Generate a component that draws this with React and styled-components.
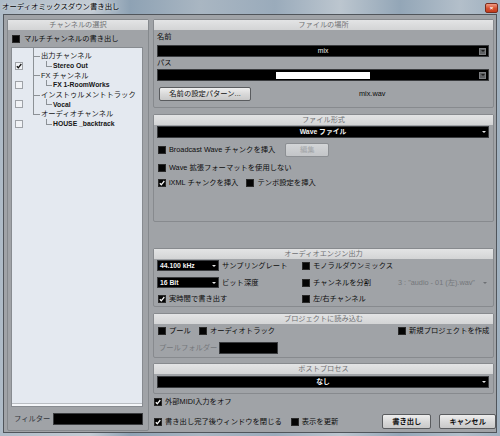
import React from 'react';
import styled, { createGlobalStyle } from 'styled-components';

const GlobalStyle = createGlobalStyle`
  html, body {
    margin: 0;
    padding: 0;
    background: #8ea0b1;
  }
  * {
    box-sizing: border-box;
  }
`;

const Window = styled.div`
  width: 500px;
  height: 436px;
  display: flex;
  flex-direction: column;
  overflow: hidden;
  background: linear-gradient(90deg, #aebbc7 0%, #c4ccd4 18%, #8ea2b4 26%, #a9b6c2 40%, #9aabbb 55%, #bcc6cf 68%, #93a6b7 80%, #b3bfca 92%, #9fb0bf 100%);
  font-family: "Liberation Sans", "Noto Sans CJK JP", sans-serif;
  font-size: 7.3px;
  color: #0c0c0c;
`;

const TitleBar = styled.div`
  height: 14px;
  flex-shrink: 0;
  display: flex;
  align-items: center;
  justify-content: space-between;
  padding: 0 2px 0 2px;
`;

const Title = styled.span`
  font-size: 7.4px;
  line-height: 14px;
  color: #000;
  text-shadow: 0 0 3px rgba(255, 255, 255, 0.8);
`;

const CloseButton = styled.div`
  width: 13px;
  height: 10px;
  margin-top: 1px;
  border: 1px solid #7b2c1d;
  border-radius: 2px;
  background: linear-gradient(#f09a82, #d4502f 55%, #c33b1c);
  color: #fff;
  font-size: 6px;
  font-weight: bold;
  line-height: 8px;
  text-align: center;
`;

const Client = styled.div`
  flex: 1;
  margin: 0 3px 3px;
  border: 1px solid #50555b;
  background: #a0a3a7;
  display: flex;
  gap: 4px;
  padding: 4px 2px 0 3px;
`;

const LeftPanel = styled.div`
  width: 142px;
  height: 412px;
  border: 1px solid #85898d;
  border-radius: 2px;
  display: flex;
  flex-direction: column;
`;

const PanelHeader = styled.div`
  height: 10px;
  flex-shrink: 0;
  background: linear-gradient(#e3e4e5, #d3d4d5);
  color: #6f7073;
  font-size: 7.2px;
  line-height: 10px;
  text-align: center;
`;

const Row = styled.div`
  display: flex;
  align-items: center;
  height: ${p => p.$h || 10}px;
  margin-top: ${p => p.$mt || 0}px;
  padding-left: ${p => p.$pl || 0}px;
  gap: ${p => p.$gap || 0}px;
  flex-shrink: 0;
`;

const Item = styled.div`
  display: flex;
  align-items: center;
  gap: 3px;
  margin-left: ${p => p.$ml || 0}px;
  white-space: nowrap;
  line-height: 10px;
`;

const Label = styled.span`
  white-space: nowrap;
  line-height: 10px;
  color: ${p => p.$color || (p.$muted ? '#74777b' : '#0c0c0c')};
  margin-left: ${p => p.$ml || 0}px;
`;

const Box = styled.span`
  width: 8px;
  height: 8px;
  flex-shrink: 0;
  display: inline-flex;
  align-items: center;
  justify-content: center;
  background: ${p => (p.$light ? '#f1f3f6' : '#050505')};
  border: 1px solid ${p => (p.$light ? '#9ea2a7' : '#2a2a2a')};
  margin-left: ${p => p.$ml || 0}px;
`;

function Check({ checked, light, ml }) {
  return (
    <Box $light={light} $ml={ml}>
      {checked && (
        <svg width="6" height="6" viewBox="0 0 6 6">
          <path d="M0.8 3.2 L2.3 4.8 L5.3 1" fill="none" stroke={light ? '#111' : '#f4f4f4'} strokeWidth="1.3" />
        </svg>
      )}
    </Box>
  );
}

const TreeBox = styled.div`
  margin: 4px 0 0 3px;
  width: 132px;
  height: 360px;
  border: 1px solid #878b90;
  background: #e4e9f0;
  display: flex;
  flex-direction: column;
`;

const TreeLead = styled.div`
  height: 3px;
  margin-left: 21px;
  border-left: 1px solid #8c9196;
  flex-shrink: 0;
`;

const TreeRow = styled.div`
  height: 9.7px;
  display: flex;
  align-items: center;
  flex-shrink: 0;
`;

const CheckCell = styled.div`
  width: 21px;
  height: 100%;
  display: flex;
  align-items: center;
  padding-left: 3px;
`;

const Trunk = styled.div`
  position: relative;
  width: 8px;
  height: 100%;
  flex-shrink: 0;
  &::before {
    content: '';
    position: absolute;
    left: 0;
    top: 0;
    height: ${p => (p.$end ? '50%' : '100%')};
    border-left: ${p => (p.$line ? '1px solid #8c9196' : 'none')};
  }
  &::after {
    content: '';
    position: absolute;
    left: 0;
    top: 50%;
    width: ${p => (p.$branch ? '7px' : '0')};
    border-top: 1px solid #8c9196;
  }
`;

const Branch = styled.div`
  position: relative;
  width: 7px;
  height: 100%;
  margin-left: 5px;
  flex-shrink: 0;
  &::before {
    content: '';
    position: absolute;
    left: 0;
    top: 0;
    height: 50%;
    border-left: 1px solid #8c9196;
  }
  &::after {
    content: '';
    position: absolute;
    left: 0;
    top: 50%;
    width: 6px;
    border-top: 1px solid #8c9196;
  }
`;

const TreeText = styled.span`
  white-space: nowrap;
  line-height: 9px;
  color: #151515;
  font-weight: ${p => (p.$bold ? 'bold' : 'normal')};
  font-size: ${p => (p.$bold ? '6.8px' : '7.3px')};
`;

const TreeSpacer = styled.div`
  flex: 1;
`;

const TreeFoot = styled.div`
  height: 3px;
  border-top: 1px solid #b9bdc2;
  background: #f4f6f9;
`;

const BlackField = styled.div`
  width: ${p => (p.$w ? `${p.$w}px` : 'auto')};
  flex: ${p => (p.$w ? '0 0 auto' : '1')};
  height: ${p => p.$h || 12}px;
  margin-left: ${p => p.$ml || 0}px;
  background: #000;
  border: 1px solid #3a3c3f;
  display: flex;
  align-items: center;
  color: #f2f2f2;
  font-weight: ${p => (p.$bold ? 'bold' : 'normal')};
  padding: 0 2px;
`;

const FieldSide = styled.div`
  flex: 1;
  display: flex;
  justify-content: flex-end;
`;

const FieldText = styled.span`
  white-space: nowrap;
  line-height: 10px;
  font-size: 6.8px;
`;

const ArrowBox = styled.span`
  width: 7px;
  height: 7px;
  background: #5e6063;
  border: 1px solid #7c7e81;
  display: inline-flex;
  align-items: center;
  justify-content: center;
  &::after {
    content: '';
    border-left: 2px solid transparent;
    border-right: 2px solid transparent;
    border-top: 2px solid #1c1c1c;
  }
`;

const Caret = styled.span`
  width: 0;
  height: 0;
  border-left: 2px solid transparent;
  border-right: 2px solid transparent;
  border-top: 2px solid ${p => p.$color || '#e6e6e6'};
`;

const PathBox = styled.span`
  width: 94px;
  height: 7px;
  background: #fff;
`;

const RightColumn = styled.div`
  width: 341px;
  display: flex;
  flex-direction: column;
`;

const Section = styled.div`
  height: ${p => p.$h}px;
  margin-top: ${p => p.$mt || 0}px;
  flex-shrink: 0;
  border: 1px solid #878a8e;
  border-radius: 2px;
  display: flex;
  flex-direction: column;
`;

const SectionBody = styled.div`
  display: flex;
  flex-direction: column;
  padding: 0 4px 0 3px;
`;

const Button = styled.div`
  width: ${p => p.$w}px;
  height: ${p => p.$h || 14}px;
  margin-left: ${p => p.$ml || 0}px;
  flex-shrink: 0;
  border: 1px solid ${p => (p.$disabled ? '#8c8f93' : '#5a5c5f')};
  border-radius: 2px;
  background: ${p => (p.$disabled ? 'linear-gradient(#d3d5d7, #c3c5c8)' : 'linear-gradient(#eeeeee, #d9d9d9 50%, #c9c9c9)')};
  color: ${p => (p.$disabled ? '#a2a5a8' : '#111')};
  font-weight: ${p => (p.$bold ? 'bold' : 'normal')};
  display: flex;
  align-items: center;
  justify-content: center;
  white-space: nowrap;
  line-height: 10px;
`;

const Col = styled.div`
  width: ${p => p.$w}px;
  display: flex;
  align-items: center;
  gap: 3px;
  flex-shrink: 0;
`;

const Fill = styled.div`
  flex: 1;
  display: flex;
  align-items: center;
  justify-content: space-between;
  padding-right: 2px;
`;

export default function App() {
  const tree = [
    { label: '出力チャンネル', child: 'Stereo Out', checked: true },
    { label: 'FX チャンネル', child: 'FX 1-RoomWorks' },
    { label: 'インストゥルメントトラック', child: 'Vocal' },
    { label: 'オーディオチャンネル', child: 'HOUSE _backtrack', last: true },
  ];

  return (
    <>
      <GlobalStyle />
      <Window>
        <TitleBar>
          <Title>オーディオミックスダウン書き出し</Title>
          <CloseButton>×</CloseButton>
        </TitleBar>
        <Client>
          <LeftPanel>
            <PanelHeader>チャンネルの選択</PanelHeader>
            <Row $h={8} $mt={5} $pl={4} $gap={4}>
              <Check />
              <Label>マルチチャンネルの書き出し</Label>
            </Row>
            <TreeBox>
              <TreeLead />
              {tree.map(node => (
                <React.Fragment key={node.label}>
                  <TreeRow>
                    <CheckCell />
                    <Trunk $line $end={node.last} $branch />
                    <TreeText>{node.label}</TreeText>
                  </TreeRow>
                  <TreeRow>
                    <CheckCell>
                      <Check light checked={node.checked} />
                    </CheckCell>
                    <Trunk $line={!node.last} />
                    <Branch />
                    <TreeText $bold>{node.child}</TreeText>
                  </TreeRow>
                </React.Fragment>
              ))}
              <TreeSpacer />
              <TreeFoot />
            </TreeBox>
            <Row $h={12} $mt={6} $pl={6}>
              <Label $color="#33373d">フィルター</Label>
              <BlackField $w={90} $ml={3} />
            </Row>
          </LeftPanel>

          <RightColumn>
            <Section $h={89}>
              <PanelHeader>ファイルの場所</PanelHeader>
              <SectionBody>
                <Row $mt={2}>
                  <Label>名前</Label>
                </Row>
                <Row $h={12} $mt={3}>
                  <BlackField>
                    <FieldSide />
                    <FieldText>mix</FieldText>
                    <FieldSide>
                      <ArrowBox />
                    </FieldSide>
                  </BlackField>
                </Row>
                <Row $mt={1}>
                  <Label>パス</Label>
                </Row>
                <Row $h={12} $mt={1}>
                  <BlackField>
                    <FieldSide />
                    <PathBox />
                    <FieldSide>
                      <ArrowBox />
                    </FieldSide>
                  </BlackField>
                </Row>
                <Row $h={14} $mt={6}>
                  <Button $w={92} $ml={2}>名前の設定パターン...</Button>
                  <Label $ml={108}>mix.wav</Label>
                </Row>
              </SectionBody>
            </Section>

            <Section $h={108} $mt={6}>
              <PanelHeader>ファイル形式</PanelHeader>
              <SectionBody>
                <Row $h={12} $mt={1}>
                  <BlackField $bold>
                    <FieldSide />
                    <FieldText>Wave ファイル</FieldText>
                    <FieldSide>
                      <Caret />
                    </FieldSide>
                  </BlackField>
                </Row>
                <Row $h={14} $mt={5} $pl={1}>
                  <Item>
                    <Check />
                    <Label>Broadcast Wave チャンクを挿入</Label>
                  </Item>
                  <Button $w={44} $ml={10} $disabled>編集</Button>
                </Row>
                <Row $mt={6} $pl={1}>
                  <Item>
                    <Check />
                    <Label>Wave 拡張フォーマットを使用しない</Label>
                  </Item>
                </Row>
                <Row $mt={5} $pl={1}>
                  <Item>
                    <Check checked />
                    <Label>iXML チャンクを挿入</Label>
                  </Item>
                  <Item $ml={8}>
                    <Check />
                    <Label>テンポ設定を挿入</Label>
                  </Item>
                </Row>
              </SectionBody>
            </Section>

            <Section $h={59} $mt={26}>
              <PanelHeader>オーディオエンジン出力</PanelHeader>
              <SectionBody>
                <Row $h={11} $mt={1}>
                  <Col $w={145}>
                    <BlackField $w={62} $h={11} $bold>
                      <FieldText>44.100 kHz</FieldText>
                      <FieldSide>
                        <Caret />
                      </FieldSide>
                    </BlackField>
                    <Label>サンプリングレート</Label>
                  </Col>
                  <Item>
                    <Check />
                    <Label>モノラルダウンミックス</Label>
                  </Item>
                </Row>
                <Row $h={11} $mt={6}>
                  <Col $w={145}>
                    <BlackField $w={62} $h={11} $bold>
                      <FieldText>16 Bit</FieldText>
                      <FieldSide>
                        <Caret />
                      </FieldSide>
                    </BlackField>
                    <Label>ビット深度</Label>
                  </Col>
                  <Col $w={96}>
                    <Check />
                    <Label>チャンネルを分割</Label>
                  </Col>
                  <Fill>
                    <Label $muted>3 : "audio - 01 (左).wav"</Label>
                    <Caret $color="#6d7074" />
                  </Fill>
                </Row>
                <Row $h={11} $mt={5}>
                  <Col $w={145}>
                    <Check checked ml={1} />
                    <Label>実時間で書き出す</Label>
                  </Col>
                  <Item>
                    <Check />
                    <Label>左/右チャンネル</Label>
                  </Item>
                </Row>
              </SectionBody>
            </Section>

            <Section $h={45} $mt={6}>
              <PanelHeader>プロジェクトに読み込む</PanelHeader>
              <SectionBody>
                <Row $mt={2} $pl={1}>
                  <Item>
                    <Check />
                    <Label>プール</Label>
                  </Item>
                  <Item $ml={8}>
                    <Check />
                    <Label>オーディオトラック</Label>
                  </Item>
                  <Item $ml={123}>
                    <Check />
                    <Label>新規プロジェクトを作成</Label>
                  </Item>
                </Row>
                <Row $h={12} $mt={6} $pl={2}>
                  <Label $muted>プールフォルダー</Label>
                  <BlackField $w={59} $ml={2} />
                </Row>
              </SectionBody>
            </Section>

            <Section $h={31} $mt={5}>
              <PanelHeader>ポストプロセス</PanelHeader>
              <SectionBody>
                <Row $h={12} $mt={2}>
                  <BlackField $bold>
                    <FieldSide />
                    <FieldText>なし</FieldText>
                    <FieldSide>
                      <Caret />
                    </FieldSide>
                  </BlackField>
                </Row>
              </SectionBody>
            </Section>

            <Row $mt={3} $pl={1}>
              <Item>
                <Check checked />
                <Label>外部MIDI入力をオフ</Label>
              </Item>
            </Row>
            <Row $h={15} $mt={7} $pl={1}>
              <Item>
                <Check checked />
                <Label>書き出し完了後ウィンドウを閉じる</Label>
              </Item>
              <Item $ml={9}>
                <Check />
                <Label>表示を更新</Label>
              </Item>
              <Button $w={49} $h={15} $ml={44} $bold>書き出し</Button>
              <Button $w={57} $h={15} $ml={8} $bold>キャンセル</Button>
            </Row>
          </RightColumn>
        </Client>
      </Window>
    </>
  );
}
